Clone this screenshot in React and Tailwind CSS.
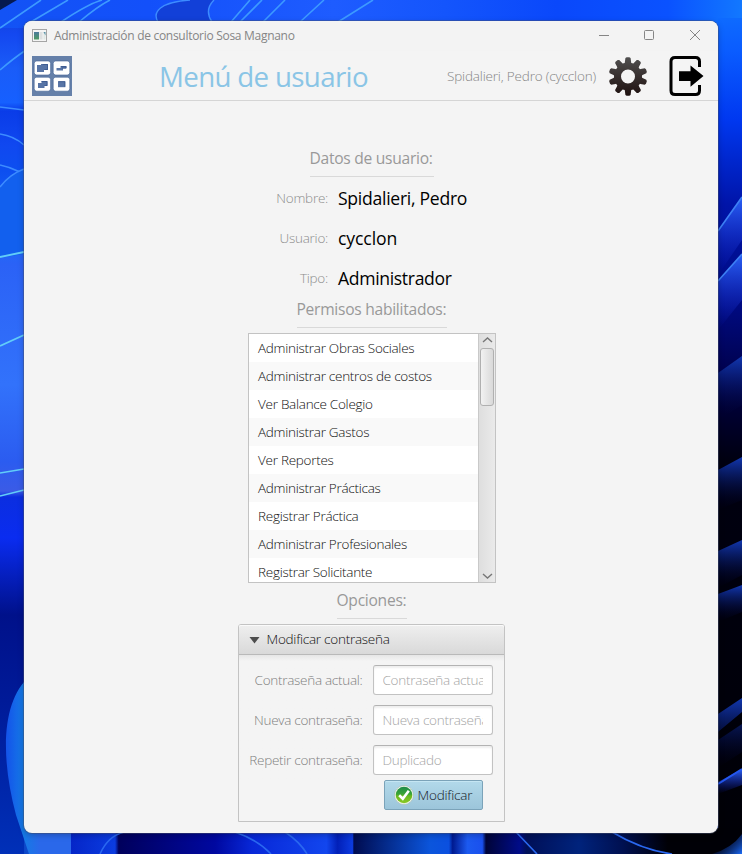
import React from "react";

const permissions = [
  "Administrar Obras Sociales",
  "Administrar centros de costos",
  "Ver Balance Colegio",
  "Administrar Gastos",
  "Ver Reportes",
  "Administrar Prácticas",
  "Registrar Práctica",
  "Administrar Profesionales",
  "Registrar Solicitante",
];

function Wallpaper() {
  return (
    <svg className="absolute inset-0" width="742" height="854" viewBox="0 0 742 854" fill="none">
      <defs>
        <linearGradient id="top" x1="0" x2="742" y1="0" y2="0" gradientUnits="userSpaceOnUse">
          <stop offset="0" stopColor="#1353f5" />
          <stop offset="0.2" stopColor="#1350fa" />
          <stop offset="0.45" stopColor="#1e5cff" />
          <stop offset="0.6" stopColor="#1455fc" />
          <stop offset="0.75" stopColor="#0a48fb" />
          <stop offset="0.9" stopColor="#0a52ff" />
          <stop offset="1" stopColor="#1278ff" />
        </linearGradient>
        <linearGradient id="left" x1="0" x2="0" y1="0" y2="854" gradientUnits="userSpaceOnUse">
          <stop offset="0" stopColor="#1040d0" />
          <stop offset="0.04" stopColor="#1448f0" />
          <stop offset="0.08" stopColor="#1a5cf8" />
          <stop offset="0.12" stopColor="#1660ff" />
          <stop offset="0.13" stopColor="#0a3ce8" />
          <stop offset="0.17" stopColor="#1048f0" />
          <stop offset="0.2" stopColor="#0d4ff0" />
          <stop offset="0.28" stopColor="#1a6af8" />
          <stop offset="0.31" stopColor="#2b62f6" />
          <stop offset="0.45" stopColor="#3272fb" />
          <stop offset="0.54" stopColor="#2b5cf0" />
          <stop offset="0.575" stopColor="#3b5be6" />
          <stop offset="0.582" stopColor="#0b2ee0" />
          <stop offset="0.63" stopColor="#0a2cf0" />
          <stop offset="0.72" stopColor="#00118a" />
          <stop offset="0.82" stopColor="#001a98" />
          <stop offset="1" stopColor="#0030b8" />
        </linearGradient>
        <linearGradient id="right" x1="0" x2="0" y1="0" y2="854" gradientUnits="userSpaceOnUse">
          <stop offset="0" stopColor="#1072ff" />
          <stop offset="0.06" stopColor="#0a5cff" />
          <stop offset="0.14" stopColor="#0038f0" />
          <stop offset="0.24" stopColor="#0014a8" />
          <stop offset="0.36" stopColor="#000a80" />
          <stop offset="0.45" stopColor="#000044" />
          <stop offset="0.54" stopColor="#000010" />
          <stop offset="1" stopColor="#000006" />
        </linearGradient>
        <linearGradient id="petal" x1="0" x2="0" y1="0" y2="1">
          <stop offset="0" stopColor="#2b62f5" />
          <stop offset="1" stopColor="#101fc4" stopOpacity="0" />
        </linearGradient>
        <linearGradient id="petalDark" x1="0" x2="0" y1="0" y2="1">
          <stop offset="0" stopColor="#1238b0" />
          <stop offset="1" stopColor="#000030" stopOpacity="0" />
        </linearGradient>
        <linearGradient id="bottom" x1="0" x2="742" y1="0" y2="0" gradientUnits="userSpaceOnUse">
          <stop offset="0" stopColor="#0028ac" />
          <stop offset="0.07" stopColor="#1b68e8" />
          <stop offset="0.095" stopColor="#2d60f0" />
          <stop offset="0.096" stopColor="#0526c8" />
          <stop offset="0.155" stopColor="#0b3ce0" />
          <stop offset="0.16" stopColor="#00005c" />
          <stop offset="0.29" stopColor="#0008a0" />
          <stop offset="0.34" stopColor="#0828d8" />
          <stop offset="0.44" stopColor="#1246ee" />
          <stop offset="0.455" stopColor="#0220b8" />
          <stop offset="0.475" stopColor="#0c3be0" />
          <stop offset="0.477" stopColor="#000c50" />
          <stop offset="0.58" stopColor="#0b55dc" />
          <stop offset="0.605" stopColor="#0b50e0" />
          <stop offset="0.61" stopColor="#001a90" />
          <stop offset="0.63" stopColor="#1c5af0" />
          <stop offset="0.65" stopColor="#1a50ee" />
          <stop offset="0.655" stopColor="#000438" />
          <stop offset="0.7" stopColor="#000c88" />
          <stop offset="0.71" stopColor="#001058" />
          <stop offset="0.78" stopColor="#00237c" />
          <stop offset="0.84" stopColor="#001050" />
          <stop offset="0.9" stopColor="#000006" />
          <stop offset="1" stopColor="#000006" />
        </linearGradient>
        <linearGradient id="corner" x1="720" x2="742" y1="832" y2="854" gradientUnits="userSpaceOnUse">
          <stop offset="0" stopColor="#000a40" stopOpacity="0" />
          <stop offset="1" stopColor="#1c6cf8" />
        </linearGradient>
        <linearGradient id="leaf" x1="7" x2="40" y1="0" y2="0" gradientUnits="userSpaceOnUse">
          <stop offset="0" stopColor="#1455ea" />
          <stop offset="0.5" stopColor="#157ae6" />
          <stop offset="1" stopColor="#2a68ea" />
        </linearGradient>
      </defs>
      <rect y="21" width="60" height="833" fill="url(#left)" />
      <rect width="742" height="28" fill="url(#top)" />
      <rect x="718" y="18" width="24" height="836" fill="url(#right)" />
      <rect x="24" y="828" width="718" height="26" fill="url(#bottom)" />
      <path d="M0 0H17L0 10Z" fill="#061a50" />
      <g stroke="#3d9aff" strokeWidth="1.6">
        <path d="M0 28L41 0M24 26L68 0M0 70Q14 58 26 50" />
        <path d="M61 22Q88 4 102 0M79 22Q98 6 110 0M231 22L250 0M240 22L262 0M263 22L285 0M300 22L324 0M338 22L373 0" />
      </g>
      <path d="M158 22C152 12 160 2 190 0H214Q204 10 212 22Z" fill="#1240d8" />
      <path d="M158 22C152 12 160 2 190 0M212 22Q204 10 214 0" stroke="#3d8cff" strokeWidth="1.400" />
      <g stroke="#3d8cff" strokeWidth="1.5">
        <path d="M0 107L24 110M0 134Q14 136 24 145M0 165Q10 167 20 172" />
        <path d="M0 187Q10 174 24 169V254L0 258Z" fill="#1260ee" stroke="none" />
        <path d="M0 187Q10 174 24 169" />
      </g>
      <g stroke="#62cdf8" strokeWidth="1.8">
        <path d="M0 257L24 252M0 346L24 335" />
        <path d="M0 473L24 469M0 496L24 490" strokeWidth="1.3" />
      </g>
      <path d="M30 676C2 700 0 755 16 815L29 854H71V830H30Z" fill="url(#leaf)" />
      <path d="M718 231L742 197V240L718 275Z" fill="url(#petal)" />
      <path d="M718 281L742 254V300L718 330Z" fill="url(#petal)" />
      <path d="M718 373L742 356V405L718 420Z" fill="url(#petalDark)" />
      <path d="M718 470L742 457V500L718 510Z" fill="url(#petalDark)" />
      <path d="M718 551L742 540V575L718 588Z" fill="url(#petalDark)" />
      <path d="M718 594L742 585V612L718 622Z" fill="url(#petalDark)" />
      <path d="M718 714L742 698V712L718 732ZM718 740L742 724V752L718 768Z" fill="url(#petalDark)" />
      <path d="M718 782L742 769V785L718 794Z" fill="url(#petal)" />
      <path d="M718 231L742 197M718 281L742 254" stroke="#3d80f5" strokeWidth="1.6" />
      <path d="M718 784L742 769" stroke="#2457f0" strokeWidth="2" />
      <path d="M100 854Q108 836 124 832M235 832Q258 840 271 854M285 832Q300 842 307 854M516 832L537 854M612 832Q642 850 672 854" stroke="#2a68f0" strokeWidth="1.6" />
      <path d="M712 854Q732 848 742 834V854Z" fill="url(#corner)" />
    </svg>
  );
}

function AppIcon() {
  return (
    <svg width="15" height="13" viewBox="0 0 15 13">
      <defs>
        <linearGradient id="ai" x1="0" x2="0" y1="0" y2="1">
          <stop offset="0" stopColor="#4b7a9c" />
          <stop offset="1" stopColor="#4e9a62" />
        </linearGradient>
      </defs>
      <rect x="0.5" y="0.5" width="14" height="12" fill="#f4f4f4" stroke="#a5a5a5" />
      <rect x="2" y="3" width="5" height="7.5" fill="url(#ai)" />
      <rect x="7.500" y="3" width="3" height="7.5" fill="#dcdfe0" />
      <rect x="11.500" y="3" width="2" height="7.5" fill="#dfe8e6" />
      <path d="M11.500 3h2v3.500z" fill="#5c93a8" />
    </svg>
  );
}

function LogoIcon() {
  return (
    <svg width="40" height="40" viewBox="0 0 40 40">
      <rect width="40" height="40" fill="#6580a9" />
      <g fill="#fff" stroke="#405f94" strokeWidth="0.6">
        <rect x="2.2" y="5" width="16.400" height="14" rx="2.4" />
        <rect x="21.2" y="5" width="16.600" height="14" rx="2.4" />
        <rect x="2.2" y="21.200" width="16.400" height="14" rx="2.4" />
        <rect x="21.2" y="21.200" width="16.600" height="14" rx="2.4" />
      </g>
      <g fill="#5875a6">
        <path d="M5 9h4V8h7v6h-4v2H5z" />
        <path d="M24.500 12h4v-2h6v2.500h-3.500v2h-6.500z" />
        <path d="M6 27h3.500v-2h6v5h-3v2H6z" />
        <rect x="26" y="25.2" width="7.3" height="6" />
      </g>
      <path d="M10.500 8.500h5v5H12.500M9.500 25.500h5.500v4h-2.500M29 10.500h5v1.500h-4M26.500 25.700h6.300v5" fill="none" stroke="#38578d" strokeWidth="0.8" />
    </svg>
  );
}

// Ten blunt teeth around a ring, traced as one polygon so a single gradient spans it.
const gearPoints = Array.from({ length: 10 }, (_, i) =>
  [
    [14, -13.5],
    [14.6, -12.5],
    [18.6, -8],
    [19.4, -4],
    [19.4, 4],
    [18.6, 8],
    [14.6, 12.5],
    [14, 13.5],
  ].map(([r, off]) => {
    const a = ((i * 36 - 90 + off) * Math.PI) / 180;
    return `${(20 + r * Math.cos(a)).toFixed(2)} ${(20.5 + r * Math.sin(a)).toFixed(2)}`;
  })
).flat();

function GearIcon() {
  return (
    <svg width="40" height="40" viewBox="0 0 40 40">
      <defs>
        <linearGradient id="gear" x1="0" x2="0" y1="0" y2="40" gradientUnits="userSpaceOnUse">
          <stop offset="0" stopColor="#525252" />
          <stop offset="0.55" stopColor="#352d2c" />
          <stop offset="1" stopColor="#1e1110" />
        </linearGradient>
      </defs>
      <path d={`M${gearPoints.join("L")}ZM27 20.500A7 7 0 1 0 13 20.500A7 7 0 1 0 27 20.500Z`} fill="url(#gear)" fillRule="evenodd" />
    </svg>
  );
}

function ExitIcon() {
  return (
    <svg width="36" height="40" viewBox="0 0 36 40">
      <path d="M30.500 11V5.500Q30.500 1.500 26.500 1.500H6Q2 1.500 2 5.500V34.500Q2 38.500 6 38.500H26.500Q30.500 38.500 30.500 34.500V29" fill="none" stroke="#000" strokeWidth="3" />
      <path d="M10 15.200H21.500V9.400L34.500 20L21.500 30.700V25H10Z" fill="#000" />
    </svg>
  );
}

function CheckIcon() {
  return (
    <svg width="20" height="20" viewBox="0 0 20 20">
      <defs>
        <linearGradient id="ck" x1="0" x2="0" y1="0" y2="1">
          <stop offset="0" stopColor="#1d8a4a" />
          <stop offset="0.45" stopColor="#3ba436" />
          <stop offset="0.55" stopColor="#68b81f" />
          <stop offset="1" stopColor="#8bc926" />
        </linearGradient>
      </defs>
      <circle cx="10" cy="10" r="9.500" fill="#f2f8f0" stroke="#a7b9ae" strokeWidth="0.6" />
      <circle cx="10" cy="10" r="8.300" fill="url(#ck)" />
      <path d="M5.200 10.300L8.800 13.800L14.800 5.800" fill="none" stroke="#fff" strokeWidth="2.600" />
    </svg>
  );
}

function Heading({ children, className }) {
  return (
    <h2 className={`h-[30px] shrink-0 border-b border-[#d9d9d9] text-[15.6px] leading-[22px] tracking-[-0.27px] whitespace-nowrap text-[#999] ${className}`}>
      {children}
    </h2>
  );
}

function DataRow({ label, value, tracking }) {
  return (
    <div className="flex h-10 items-center pt-px">
      <span className="w-[80px] text-right text-[13.5px] leading-5 font-light tracking-[-0.26px] text-[#8c8c8c]">{label}</span>
      <span className={`ml-[10px] text-[17.6px] leading-6 whitespace-nowrap text-black ${tracking}`}>{value}</span>
    </div>
  );
}

function Field({ label, placeholder }) {
  return (
    <div className="flex h-10 items-center">
      <label className="w-[124px] text-right text-[13.5px] leading-[21px] font-light tracking-[-0.28px] whitespace-nowrap text-[#808080]">{label}</label>
      <div className="ml-[10px] h-[30px] w-[120px] rounded-[3px] border border-[#c2c2c2] border-t-[#b3b3b3] bg-white px-[9px] shadow-[inset_0_2px_2px_#efefef]">
        <div className="overflow-hidden text-[13.5px] leading-[28px] font-light tracking-[-0.26px] whitespace-nowrap text-[#a5a5a5]">{placeholder}</div>
      </div>
    </div>
  );
}

export default function App() {
  return (
    <div className="relative h-[854px] w-[742px] overflow-hidden bg-[#0038e0] pt-[21px] pl-6 font-['Open_Sans','Noto_Sans',sans-serif]">
      <Wallpaper />
      <div className="relative flex h-[812px] w-[694px] flex-col overflow-hidden rounded-lg bg-[#f4f4f4] shadow-[0_0_0_1px_rgba(70,80,110,0.45),0_2px_6px_rgba(0,0,0,0.25)]">
        <div className="flex h-[30px] shrink-0 items-center bg-[#f3f3f3] pl-2">
          <div className="mb-[2px]">
            <AppIcon />
          </div>
          <span className="ml-[7px] text-[12px] tracking-[-0.29px] text-[#858585]">Administración de consultorio Sosa Magnano</span>
          <svg className="mr-[17px] mb-[2px] ml-auto" width="103" height="12" viewBox="0 0 103 12" fill="none" stroke="#858585">
            <path d="M1 6.500H11" />
            <rect x="46.500" y="1.500" width="9" height="9" rx="1" />
            <path d="M92 1L102 11M102 1L92 11" />
          </svg>
        </div>
        <header className="flex h-[50px] shrink-0 items-center border-b border-[#d5d5d5] pl-2">
          <div className="mt-[5px] self-start">
            <LogoIcon />
          </div>
          <h1 className="ml-[87px] w-[209px] text-[27.7px] leading-[40px] tracking-[-0.66px] whitespace-nowrap text-[#8ac5e6]">Menú de usuario</h1>
          <span className="mt-px ml-auto text-[13.5px] font-light tracking-[-0.17px] whitespace-nowrap text-[#858585]">Spidalieri, Pedro (cycclon)</span>
          <div className="mt-[5px] ml-[12px] self-start">
            <GearIcon />
          </div>
          <div className="mt-[5px] mr-[13px] ml-[21px] self-start">
            <ExitIcon />
          </div>
        </header>
        <main className="flex flex-col items-center pt-[46px] pl-px">
          <Heading className="w-[124px]">Datos de usuario:</Heading>
          <div className="flex w-[247px] flex-col">
            <DataRow label="Nombre:" value="Spidalieri, Pedro" tracking="tracking-[-0.28px]" />
            <DataRow label="Usuario:" value="cycclon" tracking="tracking-[-0.1px]" />
            <DataRow label="Tipo:" value="Administrador" tracking="tracking-[-0.34px]" />
          </div>
          <Heading className="mt-px w-[150px]">Permisos habilitados:</Heading>
          <div className="mt-[5px] ml-px flex h-[250px] w-[248px] border border-[#c3c3c3] bg-white">
            <ul className="flex-1 overflow-hidden">
              {permissions.map((p) => (
                <li key={p} className="h-7 pl-[9px] text-[13.5px] leading-[29px] font-light tracking-[-0.27px] whitespace-nowrap text-[#101010] even:bg-[#f9f9f9]">
                  {p}
                </li>
              ))}
            </ul>
            <div className="flex w-[17px] flex-col items-center border-l border-[#c9c9c9] bg-linear-to-r from-[#dedede] to-[#eaeaea]">
              <svg className="h-[14px] w-[11px]" viewBox="0 0 11 14" fill="none" stroke="#777" strokeWidth="1.4">
                <path d="M1 8L5.500 4L10 8" />
              </svg>
              <div className="h-[58px] w-[14px] rounded-[3px] border border-[#b0b0b0] bg-linear-to-r from-[#f2f2f2] to-[#d9d9d9]" />
              <svg className="mt-auto h-[14px] w-[11px]" viewBox="0 0 11 14" fill="none" stroke="#777" strokeWidth="1.4">
                <path d="M1 6L5.500 10L10 6" />
              </svg>
            </div>
          </div>
          <Heading className="mt-[6px] w-[70px]">Opciones:</Heading>
          <section className="mt-[5px] -ml-px flex h-[198px] w-[267px] flex-col rounded-t-[3px] border border-[#c3c3c3]">
            <div className="flex h-[30px] shrink-0 items-center rounded-t-[2px] border-b border-[#b9b9b9] bg-linear-to-b from-[#efefef] to-[#d9d9d9] pl-[10px] shadow-[inset_0_1px_0_#fafafa]">
              <svg width="11" height="8" viewBox="0 0 11 8">
                <path d="M0.500 1H10.500L5.500 7.500Z" fill="#4d4d4d" />
              </svg>
              <span className="ml-[7px] text-[13.5px] font-light tracking-[-0.25px] text-[#101010]">Modificar contraseña</span>
            </div>
            <div className="flex flex-col bg-linear-to-b from-[#e6e6e6] to-[#f4f4f4] to-[6px] pt-[5px]">
              <Field label="Contraseña actual:" placeholder="Contraseña actual" />
              <Field label="Nueva contraseña:" placeholder="Nueva contraseña" />
              <Field label="Repetir contraseña:" placeholder="Duplicado" />
            </div>
            <button className="ml-[145px] flex h-[30px] w-[99px] items-center rounded-[2px] border border-[#7ba3b9] bg-linear-to-b from-[#b2d9ea] to-[#9cc5da] pl-[9px] text-[13.5px] font-light tracking-[-0.2px] text-[#152026] shadow-[inset_0_1px_0_#c5e6f3]">
              <CheckIcon />
              <span className="ml-1 leading-[21px]">Modificar</span>
            </button>
          </section>
        </main>
      </div>
    </div>
  );
}
